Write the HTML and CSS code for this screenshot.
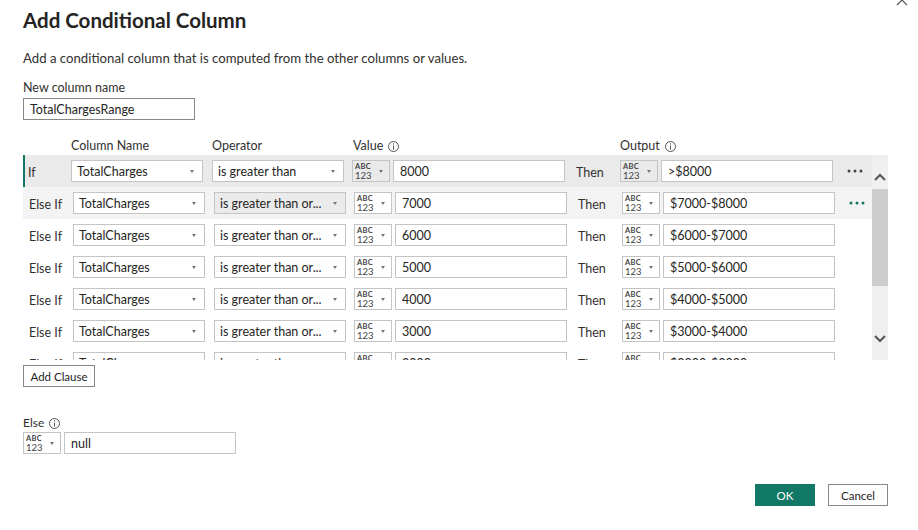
FILE: index.html
```html
<!DOCTYPE html>
<html lang="en">
<head>
<meta charset="utf-8">
<title>Add Conditional Column</title>
<link rel="stylesheet" href="styles.css">
</head>
<body>
<div class="dialog">
  <div class="close" aria-label="Close">
    <svg width="12" height="12" viewBox="0 0 12 12"><path d="M1 1 L11 11 M11 1 L1 11" stroke="#555" stroke-width="1.2" fill="none"/></svg>
  </div>

  <h1 class="title">Add Conditional Column</h1>
  <p class="desc">Add a conditional column that is computed from the other columns or values.</p>

  <div class="field-label">New column name</div>
  <div class="name-input">TotalChargesRange</div>

  <div class="head">
    <span class="h-spacer"></span>
    <span class="h-col">Column Name</span>
    <span class="h-op">Operator</span>
    <span class="h-val">Value <svg class="info" width="11" height="11" viewBox="0 0 11 11"><circle cx="5.5" cy="5.5" r="5" stroke="#555" fill="none"/><rect x="5" y="2.4" width="1" height="1.2" fill="#555"/><rect x="5" y="4.6" width="1" height="4" fill="#555"/></svg></span>
    <span class="h-out">Output <svg class="info" width="11" height="11" viewBox="0 0 11 11"><circle cx="5.5" cy="5.5" r="5" stroke="#555" fill="none"/><rect x="5" y="2.4" width="1" height="1.2" fill="#555"/><rect x="5" y="4.6" width="1" height="4" fill="#555"/></svg></span>
  </div>

  <div class="clauses">
    <div class="viewport">
      <div class="row row--active">
        <div class="lbl">If</div>
        <div class="sel sel--col"><span class="sel-text">TotalCharges</span><span class="caret"></span></div>
        <div class="sel sel--op"><span class="sel-text">is greater than</span><span class="caret"></span></div>
        <div class="type"><span class="abc"><span class="abc-t">ABC</span><span class="abc-n">123</span></span><span class="caret"></span></div>
        <div class="txt txt--val">8000</div>
        <div class="then">Then</div>
        <div class="type"><span class="abc"><span class="abc-t">ABC</span><span class="abc-n">123</span></span><span class="caret"></span></div>
        <div class="txt txt--out">&gt;$8000</div>
        <div class="more"><svg width="16" height="4" viewBox="0 0 16 4"><circle cx="2" cy="2" r="1.5" fill="#444"/><circle cx="8" cy="2" r="1.5" fill="#444"/><circle cx="14" cy="2" r="1.5" fill="#444"/></svg></div>
      </div>

      <div class="row row--hover">
        <div class="lbl">Else If</div>
        <div class="sel sel--col"><span class="sel-text">TotalCharges</span><span class="caret"></span></div>
        <div class="sel sel--op sel--dim"><span class="sel-text">is greater than or...</span><span class="caret"></span></div>
        <div class="type"><span class="abc"><span class="abc-t">ABC</span><span class="abc-n">123</span></span><span class="caret"></span></div>
        <div class="txt txt--val">7000</div>
        <div class="then">Then</div>
        <div class="type"><span class="abc"><span class="abc-t">ABC</span><span class="abc-n">123</span></span><span class="caret"></span></div>
        <div class="txt txt--out">$7000-$8000</div>
        <div class="more"><svg width="16" height="4" viewBox="0 0 16 4"><circle cx="2" cy="2" r="1.5" fill="#117865"/><circle cx="8" cy="2" r="1.5" fill="#117865"/><circle cx="14" cy="2" r="1.5" fill="#117865"/></svg></div>
      </div>

      <div class="row">
        <div class="lbl">Else If</div>
        <div class="sel sel--col"><span class="sel-text">TotalCharges</span><span class="caret"></span></div>
        <div class="sel sel--op"><span class="sel-text">is greater than or...</span><span class="caret"></span></div>
        <div class="type"><span class="abc"><span class="abc-t">ABC</span><span class="abc-n">123</span></span><span class="caret"></span></div>
        <div class="txt txt--val">6000</div>
        <div class="then">Then</div>
        <div class="type"><span class="abc"><span class="abc-t">ABC</span><span class="abc-n">123</span></span><span class="caret"></span></div>
        <div class="txt txt--out">$6000-$7000</div>
        <div class="more"></div>
      </div>

      <div class="row">
        <div class="lbl">Else If</div>
        <div class="sel sel--col"><span class="sel-text">TotalCharges</span><span class="caret"></span></div>
        <div class="sel sel--op"><span class="sel-text">is greater than or...</span><span class="caret"></span></div>
        <div class="type"><span class="abc"><span class="abc-t">ABC</span><span class="abc-n">123</span></span><span class="caret"></span></div>
        <div class="txt txt--val">5000</div>
        <div class="then">Then</div>
        <div class="type"><span class="abc"><span class="abc-t">ABC</span><span class="abc-n">123</span></span><span class="caret"></span></div>
        <div class="txt txt--out">$5000-$6000</div>
        <div class="more"></div>
      </div>

      <div class="row">
        <div class="lbl">Else If</div>
        <div class="sel sel--col"><span class="sel-text">TotalCharges</span><span class="caret"></span></div>
        <div class="sel sel--op"><span class="sel-text">is greater than or...</span><span class="caret"></span></div>
        <div class="type"><span class="abc"><span class="abc-t">ABC</span><span class="abc-n">123</span></span><span class="caret"></span></div>
        <div class="txt txt--val">4000</div>
        <div class="then">Then</div>
        <div class="type"><span class="abc"><span class="abc-t">ABC</span><span class="abc-n">123</span></span><span class="caret"></span></div>
        <div class="txt txt--out">$4000-$5000</div>
        <div class="more"></div>
      </div>

      <div class="row">
        <div class="lbl">Else If</div>
        <div class="sel sel--col"><span class="sel-text">TotalCharges</span><span class="caret"></span></div>
        <div class="sel sel--op"><span class="sel-text">is greater than or...</span><span class="caret"></span></div>
        <div class="type"><span class="abc"><span class="abc-t">ABC</span><span class="abc-n">123</span></span><span class="caret"></span></div>
        <div class="txt txt--val">3000</div>
        <div class="then">Then</div>
        <div class="type"><span class="abc"><span class="abc-t">ABC</span><span class="abc-n">123</span></span><span class="caret"></span></div>
        <div class="txt txt--out">$3000-$4000</div>
        <div class="more"></div>
      </div>

      <div class="row">
        <div class="lbl">Else If</div>
        <div class="sel sel--col"><span class="sel-text">TotalCharges</span><span class="caret"></span></div>
        <div class="sel sel--op"><span class="sel-text">is greater than or...</span><span class="caret"></span></div>
        <div class="type"><span class="abc"><span class="abc-t">ABC</span><span class="abc-n">123</span></span><span class="caret"></span></div>
        <div class="txt txt--val">2000</div>
        <div class="then">Then</div>
        <div class="type"><span class="abc"><span class="abc-t">ABC</span><span class="abc-n">123</span></span><span class="caret"></span></div>
        <div class="txt txt--out">$2000-$3000</div>
        <div class="more"></div>
      </div>
    </div>

    <div class="scrollbar">
      <div class="sb-up"><svg width="12" height="8" viewBox="0 0 12 8"><path d="M1 7 L6 2 L11 7" stroke="#555" stroke-width="2" fill="none"/></svg></div>
      <div class="sb-thumb"></div>
      <div class="sb-track"><svg width="12" height="8" viewBox="0 0 12 8"><path d="M1 1 L6 6 L11 1" stroke="#555" stroke-width="2" fill="none"/></svg></div>
    </div>
  </div>

  <div class="btn btn--add">Add Clause</div>

  <div class="else-label">Else <svg class="info" width="11" height="11" viewBox="0 0 11 11"><circle cx="5.5" cy="5.5" r="5" stroke="#555" fill="none"/><rect x="5" y="2.4" width="1" height="1.2" fill="#555"/><rect x="5" y="4.6" width="1" height="4" fill="#555"/></svg></div>
  <div class="else-row">
    <div class="type"><span class="abc"><span class="abc-t">ABC</span><span class="abc-n">123</span></span><span class="caret"></span></div>
    <div class="txt txt--val">null</div>
  </div>

  <div class="footer">
    <div class="btn btn--ok">OK</div>
    <div class="btn btn--cancel">Cancel</div>
  </div>
</div>
</body>
</html>
```

FILE: styles.css
```css
* { box-sizing: border-box; }

html, body {
  margin: 0;
  padding: 0;
  background: #ffffff;
}

body {
  width: 918px;
  height: 530px;
  overflow: hidden;
  font-family: "Lato", "Open Sans", sans-serif;
  color: #252423;
}

.dialog {
  position: relative;
  height: 530px;
  padding: 8px 0 0 23px;
}

.close {
  position: absolute;
  left: 896px;
  top: -6px;
  width: 12px;
  height: 12px;
  line-height: 0;
}

.title {
  margin: 0;
  font-size: 20.5px;
  line-height: 24px;
  font-weight: 700;
  color: #252423;
}

.desc {
  margin: 18px 0 0;
  font-size: 13.2px;
  line-height: 16px;
  color: #323130;
}

.field-label {
  margin-top: 14px;
  font-size: 12.5px;
  line-height: 16px;
  color: #323130;
}

.name-input {
  margin-top: 2px;
  width: 172px;
  height: 22px;
  border: 1px solid #8a8886;
  padding: 1px 0 0 6px;
  font-size: 12.5px;
  line-height: 19px;
}

.head {
  margin-top: 17px;
  height: 18px;
  display: flex;
  font-size: 12.5px;
  line-height: 18px;
  color: #323130;
}
.h-spacer { width: 48px; }
.h-col { width: 141px; }
.h-op { width: 140px; }
.h-val { width: 268px; display: flex; align-items: center; gap: 5px; padding-left: 1px; }
.h-out { display: flex; align-items: center; gap: 5px; }
.info { display: block; flex: none; }

.clauses {
  display: flex;
  width: 865px;
}

.viewport {
  flex: 1;
  height: 205px;
  overflow: hidden;
}

.row {
  display: flex;
  align-items: center;
  height: 32px;
  font-size: 12.5px;
}
.row--active { background: #eaeaea; }
.row--hover { background: #f3f3f3; }

.lbl {
  width: 50px;
  flex: none;
  align-self: stretch;
  padding: 4px 0 0 6px;
  line-height: 28px;
  color: #323130;
}
.row--active .lbl {
  width: 48px;
  border-left: 2px solid #117865;
  padding-left: 3px;
}

.sel {
  flex: none;
  width: 132px;
  height: 22px;
  border: 1px solid #c4c4c4;
  background: #fff;
  display: flex;
  align-items: center;
  padding: 0 8px 0 5px;
}
.sel--col { margin-right: 9px; }
.sel--op { margin-right: 8px; }
.sel--dim { background: #ebebeb; }
.sel-text {
  flex: 1;
  white-space: nowrap;
  overflow: hidden;
  padding-top: 1px;
  line-height: 19px;
}

.caret {
  flex: none;
  width: 0;
  height: 0;
  border-left: 2.5px solid transparent;
  border-right: 2.5px solid transparent;
  border-top: 3px solid #777;
}

.type {
  flex: none;
  width: 38px;
  height: 22px;
  border: 1px solid #c4c4c4;
  display: flex;
  align-items: center;
  padding: 0 6px 0 2px;
  margin-right: 3px;
  gap: 8px;
}
.row:not(.row--active) .type, .else-row .type { background: #fff; }

.abc {
  display: flex;
  flex-direction: column;
  width: 16px;
  color: #444;
}
.abc-t {
  font-size: 7.5px;
  line-height: 8px;
  font-weight: 700;
  letter-spacing: 0.3px;
}
.abc-n {
  font-size: 9.5px;
  line-height: 9px;
}

.txt {
  flex: none;
  width: 172px;
  height: 22px;
  border: 1px solid #c4c4c4;
  background: #fff;
  padding: 1px 0 0 6px;
  line-height: 19px;
  white-space: nowrap;
}

.then {
  flex: none;
  width: 55px;
  align-self: stretch;
  padding: 4px 0 0 11px;
  line-height: 28px;
  color: #323130;
}

.more {
  flex: 1;
  padding-left: 14px;
  line-height: 0;
}

.scrollbar {
  width: 16px;
  flex: none;
  height: 205px;
  background: #f0f0f0;
  display: flex;
  flex-direction: column;
}
.sb-up {
  height: 34px;
  display: flex;
  justify-content: center;
  padding-top: 18px;
  line-height: 0;
}
.sb-thumb {
  height: 97px;
  background: #cdcdcd;
}
.sb-track {
  flex: 1;
  display: flex;
  justify-content: center;
  align-items: flex-end;
  padding-bottom: 17px;
  line-height: 0;
}

.btn {
  display: flex;
  align-items: center;
  justify-content: center;
  height: 22px;
  font-size: 11.5px;
}
.btn--add {
  margin-top: 5px;
  width: 72px;
  border: 1px solid #8a8886;
  color: #252423;
}

.else-label {
  margin-top: 28px;
  display: flex;
  align-items: center;
  gap: 5px;
  font-size: 12px;
  line-height: 16px;
  color: #323130;
}

.else-row {
  margin-top: 1px;
  display: flex;
  font-size: 12.5px;
}

.footer {
  margin-top: 30px;
  display: flex;
  justify-content: flex-end;
  gap: 13px;
  padding-right: 30px;
}
.btn--ok {
  width: 60px;
  background: #117865;
  color: #ffffff;
}
.btn--cancel {
  width: 60px;
  border: 1px solid #8a8886;
  color: #252423;
}
```
